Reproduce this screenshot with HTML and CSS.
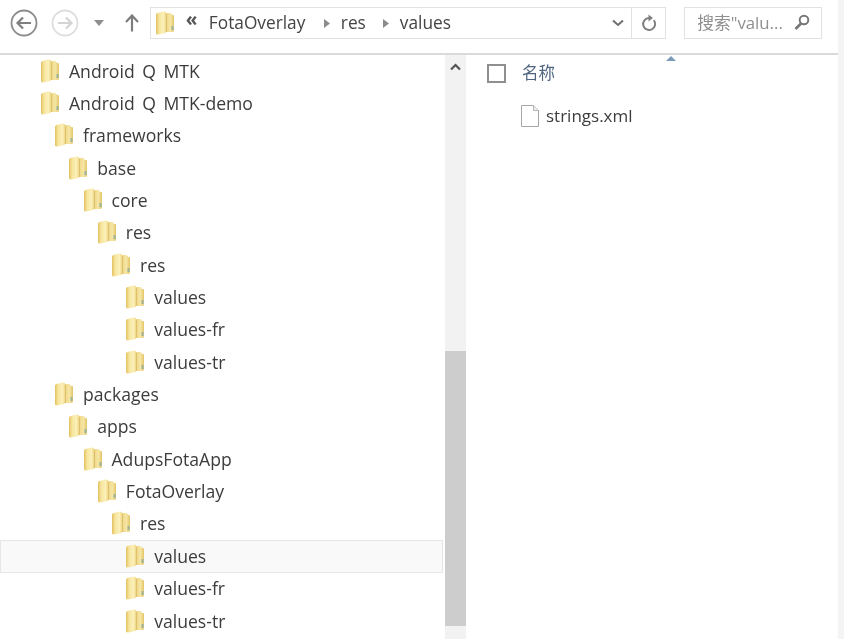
FILE: index.html
```html
<!DOCTYPE html>
<html lang="zh">
<head>
<meta charset="utf-8">
<title>values</title>
<link rel="stylesheet" href="styles.css">
</head>
<body>
<svg class="defs" width="0" height="0" aria-hidden="true">
  <defs>
    <linearGradient id="fg" x1="0" y1="0" x2="1" y2="0">
      <stop offset="0" stop-color="#e2bf5e"/><stop offset=".3" stop-color="#f6e59c"/><stop offset=".75" stop-color="#fbf0ba"/><stop offset="1" stop-color="#efd684"/>
    </linearGradient>
    <linearGradient id="bk" x1="0" y1="0" x2="1" y2="0">
      <stop offset="0" stop-color="#ecd27e"/><stop offset=".6" stop-color="#f6e6a4"/><stop offset="1" stop-color="#e3c468"/>
    </linearGradient>
    <symbol id="folder" viewBox="0 0 20 24">
      <path d="M10 2h5q1 0 1.500 1l.5 1h1q1 0 1 1v14q0 2-1.500 2H10z" fill="url(#bk)"/>
      <path d="M1 4q0-1.500 1.500-2l6-1.500q2.500-.5 2.500 1.500v19q0 1-1.500 1.300l-6.500 1.200Q1 23.500 1 22z" fill="url(#fg)"/>
      <path d="M11.500 3v18" stroke="#c9a44a" stroke-width=".8" fill="none" opacity=".55"/>
      <path d="M16.500 15h2v4h-2z" fill="#7fa9a8" opacity=".75"/>
    </symbol>
  </defs>
</svg>
<div class="window">
  <header class="toolbar">
    <div class="nav">
      <svg class="nav-back" width="28" height="28" viewBox="0 0 28 28"><circle cx="14" cy="14" r="12.500" fill="#fff" stroke="#8c8c8c" stroke-width="1.800"/><path d="M21 14H8M13 8.500L7.500 14l5.500 5.500" fill="none" stroke="#808080" stroke-width="2.200"/></svg>
      <svg class="nav-fwd" width="28" height="28" viewBox="0 0 28 28"><circle cx="14" cy="14" r="12.500" fill="#fff" stroke="#dedede" stroke-width="1.800"/><path d="M7 14h13M15 8.500l5.500 5.500-5.500 5.500" fill="none" stroke="#d4d4d4" stroke-width="2.200"/></svg>
      <svg class="nav-drop" width="10" height="6" viewBox="0 0 10 6"><path d="M0 0h10L5 6z" fill="#8e8e8e"/></svg>
      <svg class="nav-up" width="14" height="18" viewBox="0 0 14 18"><path d="M7 17.500V2M1 8l6-6.500L13 8" fill="none" stroke="#7d7d7d" stroke-width="2.200"/></svg>
    </div>
    <div class="address">
      <svg class="addr-folder" width="20" height="24"><use href="#folder"/></svg>
      <span class="chev-dbl">«</span>
      <span class="crumb crumb-a">FotaOverlay</span>
      <svg class="tri" width="6" height="9" viewBox="0 0 6 9"><path d="M0 0l6 4.500L0 9z" fill="#8c8c8c"/></svg>
      <span class="crumb crumb-b">res</span>
      <svg class="tri" width="6" height="9" viewBox="0 0 6 9"><path d="M0 0l6 4.500L0 9z" fill="#8c8c8c"/></svg>
      <span class="crumb">values</span>
      <svg class="addr-chev" width="12" height="8" viewBox="0 0 12 8"><path d="M1 1.500l5 4.500 5-4.500" fill="none" stroke="#6e6e6e" stroke-width="2"/></svg>
      <div class="refresh">
        <svg width="16" height="18" viewBox="0 0 16 18"><path d="M12.800 6.200A6 6 0 1 1 8 4" fill="none" stroke="#808080" stroke-width="2"/><path d="M7.500 0.500L12 4l-4.500 3.500z" fill="#808080"/></svg>
      </div>
    </div>
    <div class="search">
      <span class="search-text">搜索"valu...</span>
      <svg width="16" height="16" viewBox="0 0 16 16"><circle cx="10" cy="6" r="4.300" fill="none" stroke="#777" stroke-width="2"/><path d="M7 9.500L1.500 15" stroke="#777" stroke-width="2.600"/></svg>
    </div>
  </header>
  <main class="panes">
    <nav class="tree">
      <div class="row d0"><svg class="fi" width="20" height="24"><use href="#folder"/></svg><span>Android Q MTK</span></div>
      <div class="row d0"><svg class="fi" width="20" height="24"><use href="#folder"/></svg><span>Android Q MTK-demo</span></div>
      <div class="row d1"><svg class="fi" width="20" height="24"><use href="#folder"/></svg><span>frameworks</span></div>
      <div class="row d2"><svg class="fi" width="20" height="24"><use href="#folder"/></svg><span>base</span></div>
      <div class="row d3"><svg class="fi" width="20" height="24"><use href="#folder"/></svg><span>core</span></div>
      <div class="row d4"><svg class="fi" width="20" height="24"><use href="#folder"/></svg><span>res</span></div>
      <div class="row d5"><svg class="fi" width="20" height="24"><use href="#folder"/></svg><span>res</span></div>
      <div class="row d6"><svg class="fi" width="20" height="24"><use href="#folder"/></svg><span>values</span></div>
      <div class="row d6"><svg class="fi" width="20" height="24"><use href="#folder"/></svg><span>values-fr</span></div>
      <div class="row d6"><svg class="fi" width="20" height="24"><use href="#folder"/></svg><span>values-tr</span></div>
      <div class="row d1"><svg class="fi" width="20" height="24"><use href="#folder"/></svg><span>packages</span></div>
      <div class="row d2"><svg class="fi" width="20" height="24"><use href="#folder"/></svg><span>apps</span></div>
      <div class="row d3"><svg class="fi" width="20" height="24"><use href="#folder"/></svg><span>AdupsFotaApp</span></div>
      <div class="row d4"><svg class="fi" width="20" height="24"><use href="#folder"/></svg><span>FotaOverlay</span></div>
      <div class="row d5"><svg class="fi" width="20" height="24"><use href="#folder"/></svg><span>res</span></div>
      <div class="row d6 selected"><svg class="fi" width="20" height="24"><use href="#folder"/></svg><span>values</span></div>
      <div class="row d6"><svg class="fi" width="20" height="24"><use href="#folder"/></svg><span>values-fr</span></div>
      <div class="row d6"><svg class="fi" width="20" height="24"><use href="#folder"/></svg><span>values-tr</span></div>
    </nav>
    <div class="scrollbar">
      <svg class="sb-up" width="11" height="8" viewBox="0 0 11 8"><path d="M1 6.500l4.500-4.500 4.500 4.500" fill="none" stroke="#555" stroke-width="2.200"/></svg>
      <div class="thumb"></div>
    </div>
    <section class="files">
      <svg class="sort" width="10" height="5" viewBox="0 0 10 5"><path d="M0 5L5 0l5 5z" fill="#7c9bbb"/></svg>
      <div class="head">
        <span class="check"></span>
        <span class="head-label">名称</span>
      </div>
      <div class="file">
        <svg width="20" height="24" viewBox="0 0 20 24"><path d="M1.500 1.500h12l5 5v16h-17z" fill="#fff" stroke="#a6a6a6"/><path d="M13.500 1.500v5h5" fill="#eee" stroke="#b5b5b5"/></svg>
        <span>strings.xml</span>
      </div>
    </section>
  </main>
</div>
</body>
</html>
```
FILE: styles.css
```css
* { box-sizing: border-box; }
html, body { margin: 0; height: 100%; }
body {
  background: #fff;
  font-family: "Open Sans", "Noto Sans CJK SC", sans-serif;
  color: #3f3f3f;
  overflow: hidden;
}
.defs { display: block; height: 0; }
.window {
  width: 844px;
  height: 639px;
  display: flex;
  flex-direction: column;
  border-right: 6px solid #f4f4f4;
  filter: blur(0.35px);
}
.toolbar {
  height: 55px;
  flex: none;
  display: flex;
  align-items: flex-start;
  padding: 7px 16px 0 10px;
  border-bottom: 2px solid #dadada;
}
.nav {
  width: 140px;
  height: 31px;
  display: flex;
  align-items: center;
}
.nav-back { margin-right: 13px; }
.nav-fwd { margin-right: 15px; }
.nav-drop { margin-right: 21px; }
.address {
  width: 517px;
  height: 32px;
  border: 1px solid #e2e2e2;
  display: flex;
  align-items: center;
  padding-left: 4px;
  font-size: 17.300px;
}
.addr-folder { margin-right: 11px; }
.chev-dbl { width: 23px; font-size: 19px; font-weight: 700; color: #555; line-height: 1; margin-top: -7px; }
.crumb { color: #444; margin-top: -2px; }
.crumb-a { width: 115px; }
.crumb-b { width: 42px; }
.tri { margin-right: 11px; }
.addr-chev { margin-left: auto; margin-right: 7px; }
.refresh {
  width: 34px;
  height: 100%;
  border-left: 1px solid #e2e2e2;
  display: flex;
  align-items: center;
  justify-content: center;
}
.search {
  width: 138px;
  height: 32px;
  margin-left: 18px;
  border: 1px solid #e2e2e2;
  display: flex;
  align-items: center;
  justify-content: space-between;
  padding: 0 11px 2px 12px;
  font-size: 16.800px;
  color: #8f8f8f;
}
.panes {
  flex: 1;
  min-height: 0;
  display: flex;
  margin-right: -1px;
}
.tree {
  width: 445px;
  flex: none;
  padding-right: 2px;
}
.row {
  height: 32.350px;
  display: flex;
  align-items: center;
  gap: 9px;
  font-size: 17.600px;
  word-spacing: 3px;
  color: #3c3c3c;
}
.row span { margin-top: -1px; }
.fi { flex: none; margin-top: -1px; }
.d0 { padding-left: 40px; }
.d1 { padding-left: 54px; }
.d2 { padding-left: 68.300px; }
.d3 { padding-left: 82.500px; }
.d4 { padding-left: 96.800px; }
.d5 { padding-left: 111px; }
.d6 { padding-left: 125.200px; }
.selected {
  background: #f9f9f9;
  outline: 1px solid #e6e6e6;
  outline-offset: -1px;
}
.scrollbar {
  width: 21px;
  flex: none;
  background: #f2f2f2;
  padding-top: 8px;
  display: flex;
  flex-direction: column;
  align-items: center;
}
.sb-up { flex: none; }
.thumb {
  width: 21px;
  height: 275px;
  margin-top: 280px;
  background: #cdcdcd;
}
.files {
  flex: 1;
  position: relative;
  padding: 8px 0 0 21px;
}
.sort { position: absolute; left: 200px; top: 1px; }
.head {
  display: flex;
  align-items: center;
  height: 20px;
}
.check {
  width: 19px;
  height: 19px;
  border: 2px solid #8f8f8f;
  background: #fff;
  margin-right: 16px;
}
.head-label { font-size: 16.500px; color: #4f6580; margin-top: -2px; }
.file {
  display: flex;
  align-items: center;
  gap: 6px;
  margin: 21px 0 0 33px;
  font-size: 17px;
  color: #3c3c3c;
}
.file span { margin-top: -1px; }
```
